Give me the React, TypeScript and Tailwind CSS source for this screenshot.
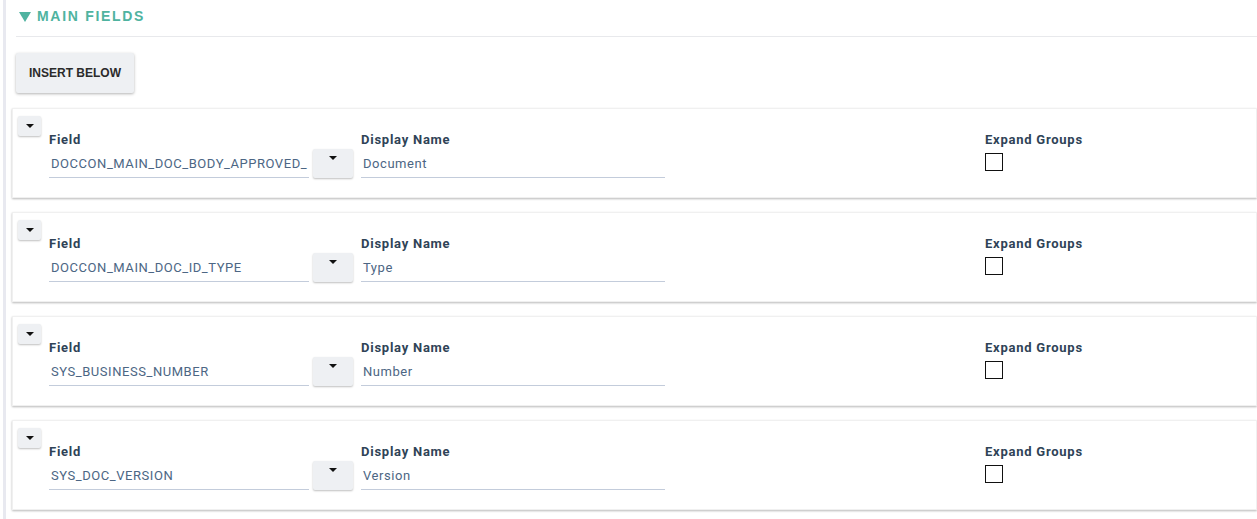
import React from "react";

// Field mapping rows shown under "Main Fields"
const rows = [
  { field: "DOCCON_MAIN_DOC_BODY_APPROVED_", name: "Document" },
  { field: "DOCCON_MAIN_DOC_ID_TYPE", name: "Type" },
  { field: "SYS_BUSINESS_NUMBER", name: "Number" },
  { field: "SYS_DOC_VERSION", name: "Version" },
];

function Caret() {
  return (
    <svg width="8" height="4" viewBox="0 0 8 4" className="block">
      <path d="M0 0 L8 0 L4 4 Z" fill="#111" />
    </svg>
  );
}

const label = "text-[13px] leading-[16px] font-bold tracking-[0.75px] text-[#2f4357]";
const input = "h-[30px] border-b border-[#c3ccdb] pl-[2px] pt-[3px] flex items-center text-[13px] tracking-[0.55px] text-[#4c6684] whitespace-nowrap overflow-hidden";

function FieldCard({ field, name }: { field: string; name: string }) {
  return (
    <div className="flex h-[90px] bg-white border border-[#f0f0f0] shadow-[0_1px_2px_rgba(0,0,0,0.28)]">
      <button className="ml-[5px] mt-[7px] w-[23px] h-[20px] flex items-center justify-center bg-[#eef0f3] rounded-[2px] shadow-[0_1px_2px_rgba(0,0,0,0.25)]">
        <Caret />
      </button>

      <div className="ml-[8px] pt-[23px] flex">
        {/* Field */}
        <div className="w-[312px]">
          <div className={label}>Field</div>
          <div className="flex items-end">
            <div className={`w-[260px] ${input}`}>{field}</div>
            <button className="ml-[4px] w-[40px] h-[29px] flex items-start justify-center pt-[7px] bg-[#eef0f3] rounded-[2px] shadow-[0_1px_2px_rgba(0,0,0,0.25)]">
              <Caret />
            </button>
          </div>
        </div>

        {/* Display Name */}
        <div className="w-[624px]">
          <div className={label}>Display Name</div>
          <div className={`w-[304px] ${input}`}>{name}</div>
        </div>

        {/* Expand Groups */}
        <div>
          <div className={label}>Expand Groups</div>
          <div className="mt-[5px] w-[18px] h-[18px] border border-[#111] bg-white" />
        </div>
      </div>
    </div>
  );
}

export default function App() {
  return (
    <div className="w-[1257px] h-[519px] bg-white flex overflow-hidden font-['Roboto',sans-serif]">
      <div className="ml-[3px] w-[3px] h-full bg-[#e8e9f0]" />

      <div className="flex-1 pl-[6px]">
        {/* Section header */}
        <div className="ml-[4px] h-[37px] border-b border-[#e8e9ec] flex items-center pl-[3px] pb-[3px]">
          <svg width="12" height="10" viewBox="0 0 12 10" className="mr-[6px]">
            <path d="M0 0 L12 0 L6 10 Z" fill="#4fb3a0" />
          </svg>
          <span className="font-['Liberation_Sans',Arial,sans-serif] font-bold text-[14px] tracking-[1.7px] text-[#4fb3a0]">
            MAIN FIELDS
          </span>
        </div>

        <button className="ml-[4px] mt-[16px] w-[118px] h-[40px] bg-[#eef0f3] rounded-[2px] shadow-[0_1px_3px_rgba(0,0,0,0.3)] font-['Liberation_Sans',Arial,sans-serif] font-bold text-[12px] text-[#2b2b2b]">
          INSERT BELOW
        </button>

        <div className="mt-[15px] flex flex-col gap-[14px]">
          {rows.map((r) => (
            <FieldCard key={r.field} field={r.field} name={r.name} />
          ))}
        </div>
      </div>
    </div>
  );
}
